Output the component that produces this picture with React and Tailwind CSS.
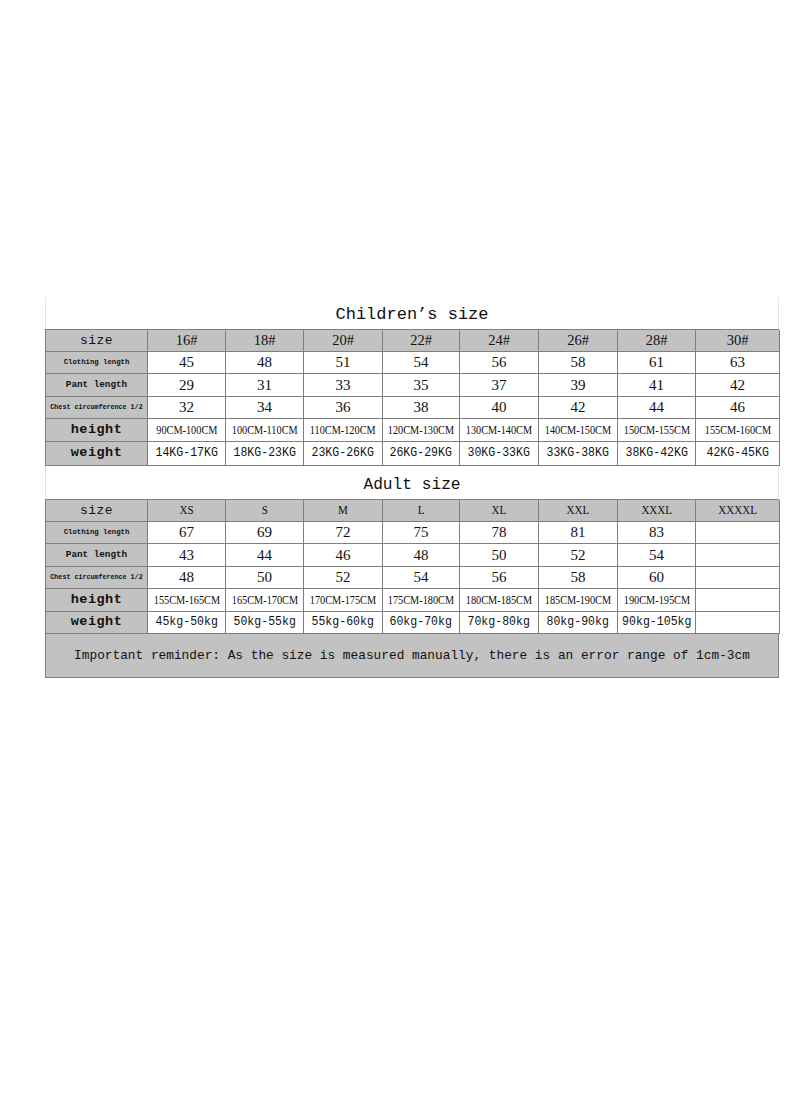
const MONO = 'font-["Liberation_Mono","DejaVu_Sans_Mono",monospace]'
const SERIF = 'font-["Liberation_Serif","DejaVu_Serif",serif]'

const COLS = 'grid grid-cols-[102px_78px_78px_79px_77px_79px_79px_78px_84px]'

const LABELS = {
  size: { text: 'size', cls: `${MONO} text-[13px] tracking-[0.5px]` },
  clothing: { text: 'Clothing length', cls: `${MONO} text-[7.3px] font-bold` },
  pant: { text: 'Pant length', cls: `${MONO} text-[9.3px] font-bold` },
  chest: { text: 'Chest circumference 1/2', cls: `${MONO} text-[6.7px] font-bold` },
  height: { text: 'height', cls: `${MONO} text-[13.5px] font-bold tracking-[0.5px]` },
  weight: { text: 'weight', cls: `${MONO} text-[13.5px] font-bold tracking-[0.5px]` },
}

// tall, narrow glyphs as in the scanned chart
const RANGE = `${SERIF} text-[12.4px] scale-x-[0.83]`
const KG = `${MONO} text-[13.6px] scale-x-[0.85]`

const children = {
  title: 'Children’s size',
  head: ['16#', '18#', '20#', '22#', '24#', '26#', '28#', '30#'],
  headCls: `${SERIF} text-[14.5px]`,
  rows: [
    { label: 'clothing', h: 'h-[22px]', cls: `${SERIF} text-[15px]`, v: ['45', '48', '51', '54', '56', '58', '61', '63'] },
    { label: 'pant', h: 'h-[23px]', cls: `${SERIF} text-[15px]`, v: ['29', '31', '33', '35', '37', '39', '41', '42'] },
    { label: 'chest', h: 'h-[22px]', cls: `${SERIF} text-[15px]`, v: ['32', '34', '36', '38', '40', '42', '44', '46'] },
    { label: 'height', h: 'h-[23px]', cls: RANGE, v: ['90CM-100CM', '100CM-110CM', '110CM-120CM', '120CM-130CM', '130CM-140CM', '140CM-150CM', '150CM-155CM', '155CM-160CM'] },
    { label: 'weight', h: 'h-[24px]', cls: KG, v: ['14KG-17KG', '18KG-23KG', '23KG-26KG', '26KG-29KG', '30KG-33KG', '33KG-38KG', '38KG-42KG', '42KG-45KG'] },
  ],
}

const adult = {
  title: 'Adult size',
  head: ['XS', 'S', 'M', 'L', 'XL', 'XXL', 'XXXL', 'XXXXL'],
  headCls: `${SERIF} text-[13.5px] scale-x-[0.82]`,
  rows: [
    { label: 'clothing', h: 'h-[22px]', cls: `${SERIF} text-[15px]`, v: ['67', '69', '72', '75', '78', '81', '83', ''] },
    { label: 'pant', h: 'h-[23px]', cls: `${SERIF} text-[15px]`, v: ['43', '44', '46', '48', '50', '52', '54', ''] },
    { label: 'chest', h: 'h-[22px]', cls: `${SERIF} text-[15px]`, v: ['48', '50', '52', '54', '56', '58', '60', ''] },
    { label: 'height', h: 'h-[23px]', cls: RANGE, v: ['155CM-165CM', '165CM-170CM', '170CM-175CM', '175CM-180CM', '180CM-185CM', '185CM-190CM', '190CM-195CM', ''] },
    { label: 'weight', h: 'h-[22px]', cls: KG, v: ['45kg-50kg', '50kg-55kg', '55kg-60kg', '60kg-70kg', '70kg-80kg', '80kg-90kg', '90kg-105kg', ''] },
  ],
}

function Cell({ gray, className = '', children }) {
  return (
    <div className={`flex items-center justify-center whitespace-nowrap overflow-hidden border-r border-b border-[#7f7f7f] ${gray ? 'bg-[#c2c2c2]' : 'bg-white'}`}>
      <span className={`inline-block text-[#111] ${className}`}>{children}</span>
    </div>
  )
}

function SizeTable({ data, first }) {
  return (
    <div>
      {/* title strip */}
      <div className={`flex items-end justify-center ${first ? 'h-[32px]' : 'h-[33px]'} border-l border-r border-[#e4e4e4] bg-white`}>
        <span className={`${MONO} ${first ? 'text-[17px]' : 'text-[16.2px]'} leading-none pb-[6px] text-[#111]`}>{data.title}</span>
      </div>

      <div className={`${COLS} h-[23px] border-l border-t border-[#7f7f7f]`}>
        <Cell gray className={LABELS.size.cls}>{LABELS.size.text}</Cell>
        {data.head.map((h, i) => (
          <Cell key={i} gray className={data.headCls}>{h}</Cell>
        ))}
      </div>

      {data.rows.map(row => (
        <div key={row.label} className={`${COLS} ${row.h} border-l border-[#7f7f7f]`}>
          <Cell gray className={LABELS[row.label].cls}>{LABELS[row.label].text}</Cell>
          {row.v.map((v, i) => (
            <Cell key={i} className={row.cls}>{v}</Cell>
          ))}
        </div>
      ))}
    </div>
  )
}

export default function App() {
  return (
    <div className="min-h-[1096px] w-[800px] bg-white pt-[297px] pl-[45px]">
      <div className="w-[734px]">
        <SizeTable data={children} first />
        <SizeTable data={adult} />
        <div className="h-[44px] flex items-center justify-center border-l border-r border-b border-[#7f7f7f] bg-[#c2c2c2]">
          <span className={`${MONO} text-[12.8px] text-[#111] whitespace-nowrap`}>
            Important reminder: As the size is measured manually, there is an error range of 1cm-3cm
          </span>
        </div>
      </div>
    </div>
  )
}
